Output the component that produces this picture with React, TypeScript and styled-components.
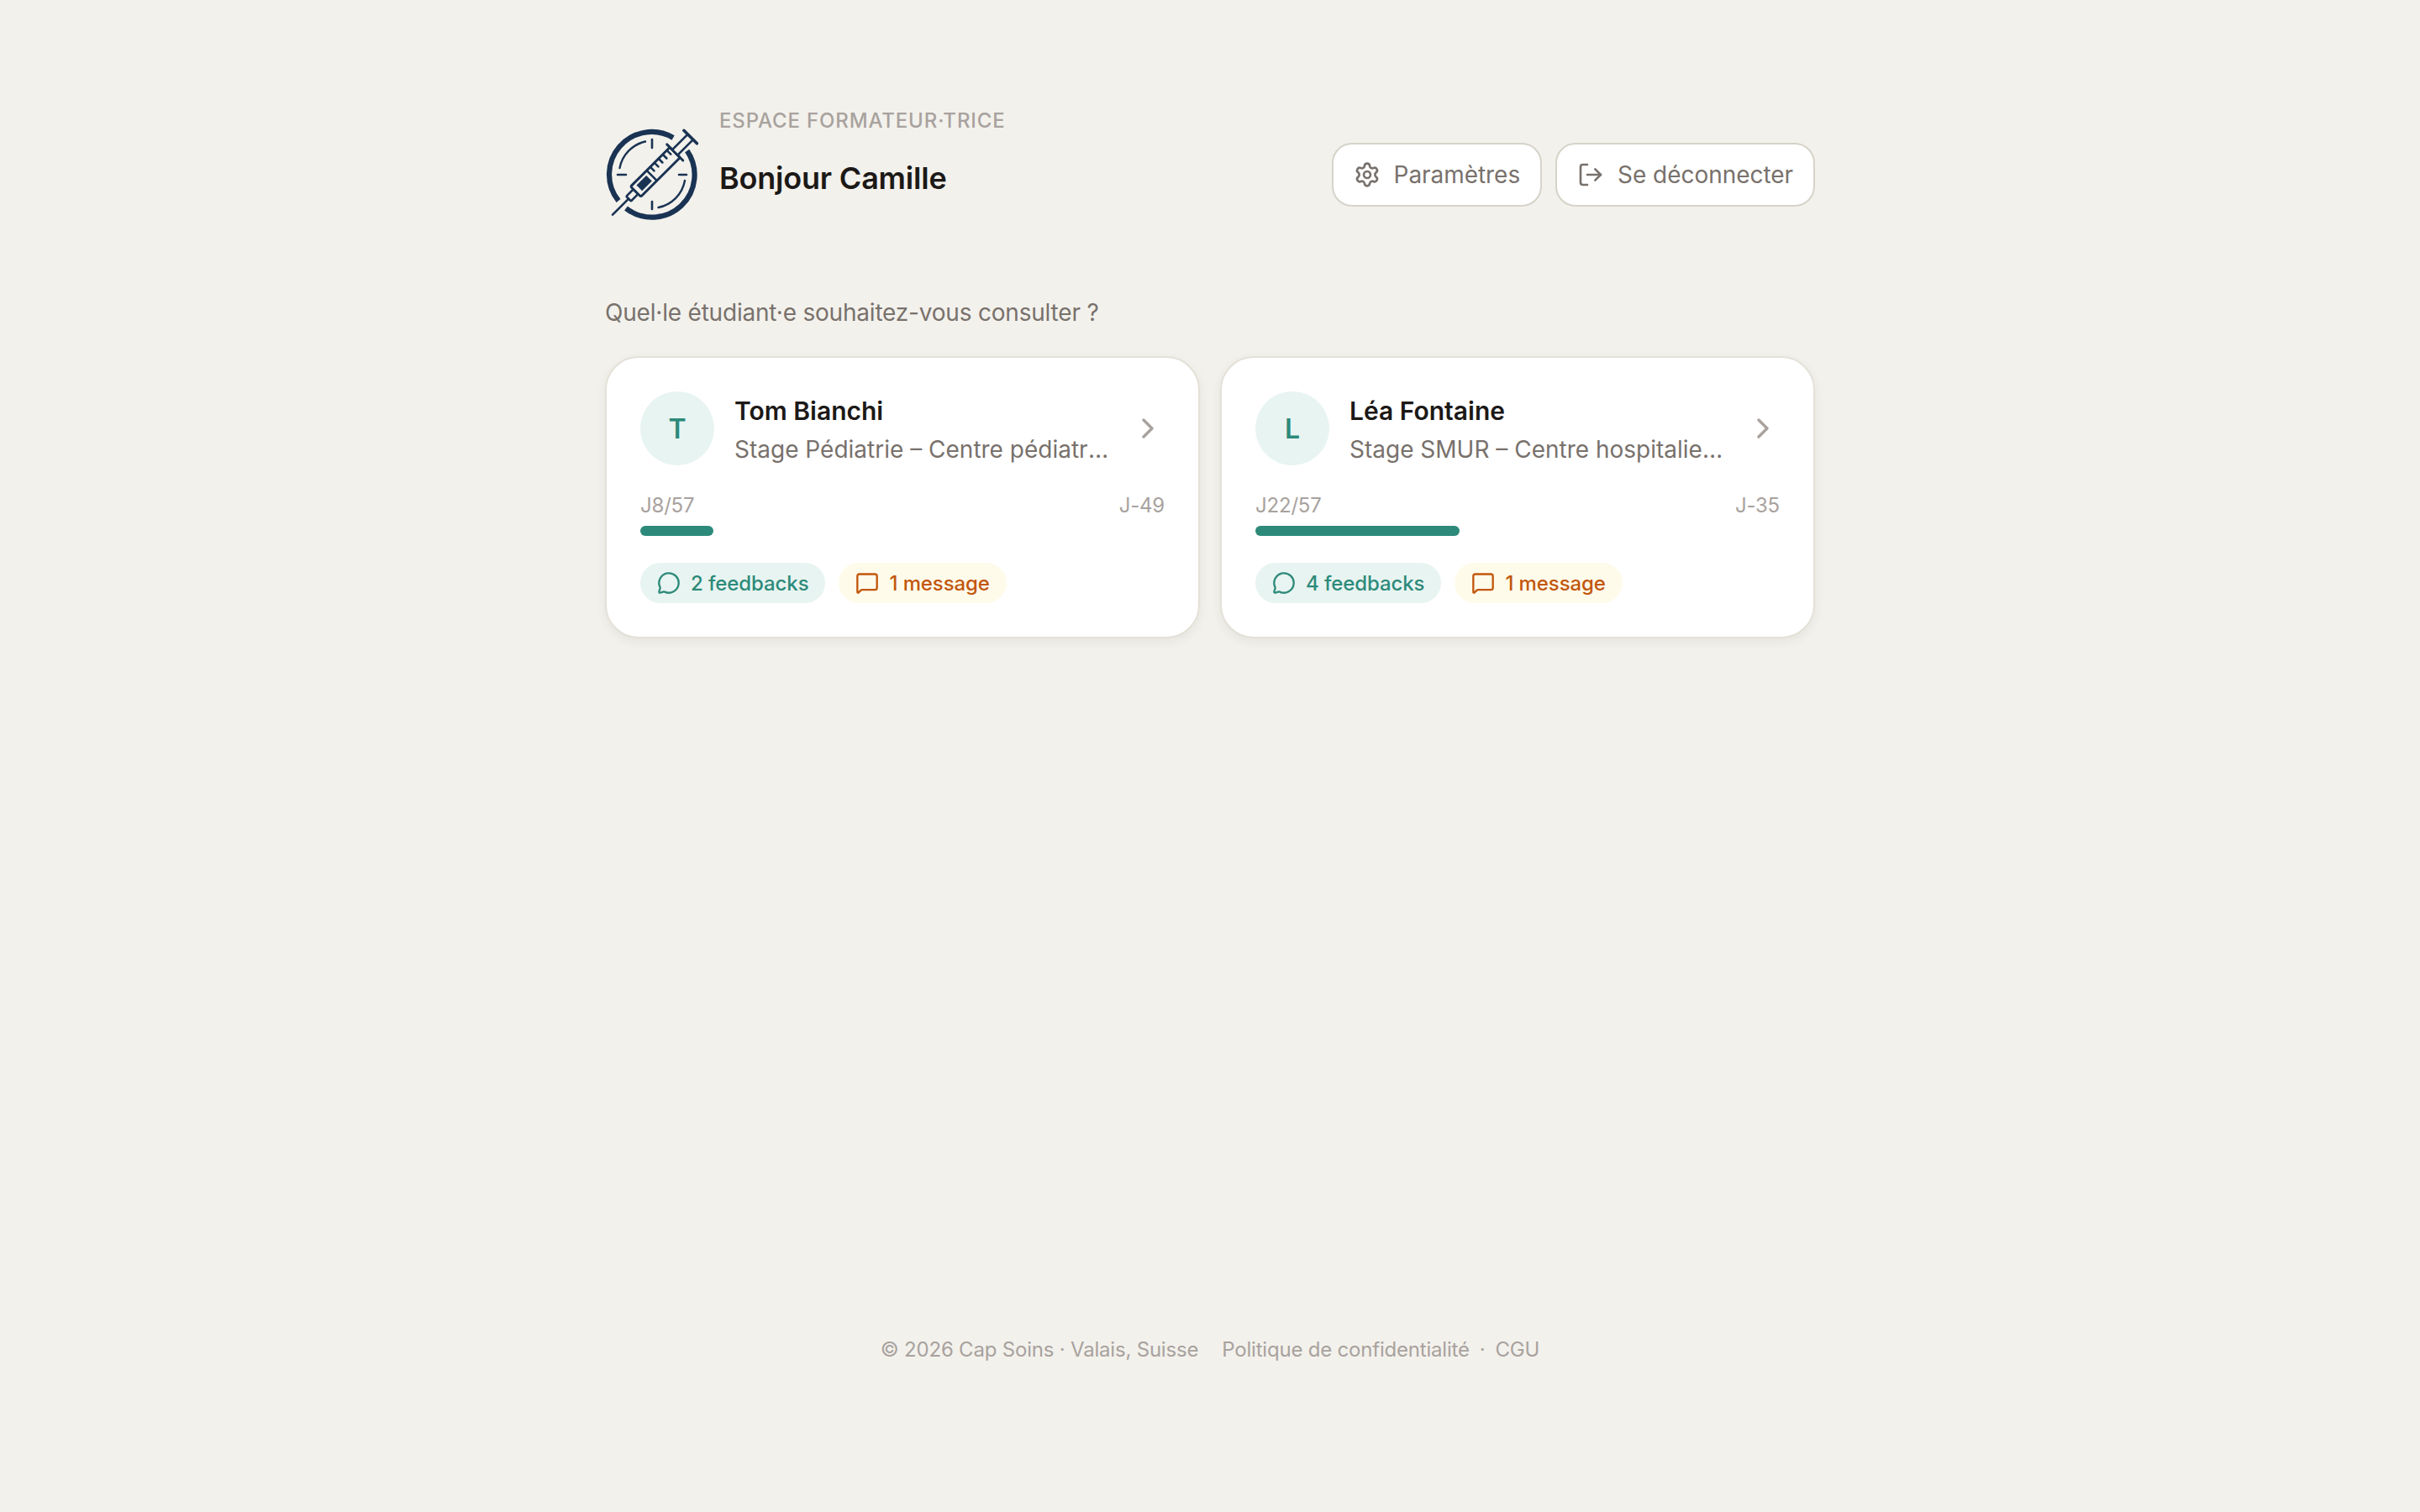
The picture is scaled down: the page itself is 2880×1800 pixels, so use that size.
import * as React from 'react'
import styled, { createGlobalStyle } from 'styled-components'
import { ChevronRight, LogOut, MessageCircle, MessageSquare, Settings } from 'lucide-react'

const GlobalStyle = createGlobalStyle`
	html, body {
		margin: 0;
		padding: 0;
		background: #f3f1ec;
		font-family: Inter, "Noto Sans", sans-serif;
	}
`

const Page = styled.div`
	min-height: 1800px;
	box-sizing: border-box;
	display: flex;
	flex-direction: column;
	align-items: center;
	padding-top: 126px;
`
const Main = styled.main`
	width: 1440px;
	flex: 1;
`
const Header = styled.header`
	display: flex;
	align-items: center;
	justify-content: space-between;
	height: 164px;
`
const Identity = styled.div`
	display: flex;
	align-items: center;
	gap: 24px;
`
const Logo = styled.svg`
	width: 112px;
	height: 112px;
	flex-shrink: 0;
`
const Greeting = styled.div`
	display: flex;
	flex-direction: column;
	padding-bottom: 44px;
	margin-top: -8px;
`
const Eyebrow = styled.span`
	font-size: 24px;
	line-height: 36px;
	font-weight: 500;
	letter-spacing: 0.85px;
	text-transform: uppercase;
	color: #a8a29e;
`
const Hello = styled.h1`
	margin: 24px 0 0;
	font-size: 36px;
	line-height: 52px;
	font-weight: 600;
	letter-spacing: -0.2px;
	color: #1c1917;
`
const Actions = styled.div`
	display: flex;
	gap: 16px;
`
const ActionButton = styled.button`
	display: flex;
	align-items: center;
	gap: 16px;
	height: 76px;
	padding: 0 24px;
	border: 2px solid #d6d3c9;
	border-radius: 24px;
	background: #fff;
	font-family: inherit;
	font-size: 28px;
	letter-spacing: -0.05px;
	color: #78716c;
`
const Intro = styled.p`
	margin: 60px 0 30px;
	font-size: 28px;
	line-height: 44px;
	letter-spacing: -0.2px;
	color: #78716c;
`
const CardGrid = styled.div`
	display: grid;
	grid-template-columns: 1fr 1fr;
	gap: 24px;
`
const Card = styled.article`
	box-sizing: border-box;
	padding: 40px;
	border: 2px solid #e4e1d8;
	border-radius: 40px;
	background: #fff;
	box-shadow: 0 4px 12px rgba(60, 50, 30, 0.07);
	min-width: 0;
`
const CardTop = styled.div`
	display: flex;
	align-items: center;
	gap: 24px;
`
const Avatar = styled.div`
	width: 88px;
	height: 88px;
	flex-shrink: 0;
	display: flex;
	align-items: center;
	justify-content: center;
	border-radius: 50%;
	background: #e8f4f1;
	font-size: 32px;
	font-weight: 600;
	color: #2d8a7a;
`
const CardText = styled.div`
	flex: 1;
	min-width: 0;
	margin-bottom: -4px;
`
const StudentName = styled.div`
	font-size: 30px;
	line-height: 46px;
	font-weight: 600;
	color: #1c1917;
`
const Placement = styled.div`
	font-size: 28px;
	line-height: 46px;
	color: #78716c;
	white-space: nowrap;
	overflow: hidden;
	text-overflow: ellipsis;
`
const Chevron = styled(ChevronRight)`
	flex-shrink: 0;
	color: #a8a29e;
`
const Meta = styled.div`
	display: flex;
	justify-content: space-between;
	margin-top: 30px;
	font-size: 24px;
	line-height: 36px;
	letter-spacing: -0.2px;
	color: #a8a29e;
`
const Track = styled.div`
	height: 12px;
	margin-top: 6px;
	border-radius: 6px;
	background: #fff;
`
const Fill = styled.div`
	height: 100%;
	border-radius: 6px;
	background: #2d8a7a;
`
const Chips = styled.div`
	display: flex;
	gap: 16px;
	margin-top: 32px;
`
const Chip = styled.span<{ $tone: 'teal' | 'amber' }>`
	display: inline-flex;
	align-items: center;
	gap: 12px;
	height: 48px;
	padding: 0 20px;
	border-radius: 24px;
	font-size: 24px;
	font-weight: 500;
	letter-spacing: -0.1px;
	background: ${p => (p.$tone === 'teal' ? '#e8f4f1' : '#fffbeb')};
	color: ${p => (p.$tone === 'teal' ? '#2d8a7a' : '#c2570c')};
`
const Footer = styled.footer`
	display: flex;
	gap: 28px;
	padding-bottom: 174px;
	font-size: 24px;
	line-height: 38px;
	letter-spacing: -0.2px;
	color: #a8a29e;
`
const FooterLinks = styled.span`
	display: inline-flex;
	gap: 12px;
`

const SyringeLogo = () => (
	<Logo viewBox="10 7 112 112" fill="none" stroke="#1a3353" strokeLinecap="round">
		<path d="M91.1 19 A50.5 50.5 0 0 0 26 94" strokeWidth="6.2" strokeLinecap="butt" />
		<path d="M35 103 A50.5 50.5 0 0 0 107.7 34.6" strokeWidth="6.2" strokeLinecap="butt" />
		<path d="M58 23.5 A40 40 0 0 0 27.5 55" strokeWidth="2.4" />
		<path d="M105 70 A40 40 0 0 1 73.5 102" strokeWidth="2.4" />
		<path d="M66 21V31M66 95V104M25 63H35M98 63H107" strokeWidth="2.6" />
		<g transform="translate(19 110.7) rotate(-45)" strokeWidth="2.6">
			<path d="M0 0H27" />
			<rect x="27" y="-4" width="12" height="8" rx="1" strokeLinejoin="round" />
			<rect x="39" y="-8.6" width="66" height="17.2" rx="2" fill="#f3f1ec" strokeWidth="3" />
			<rect x="45" y="-4.7" width="16.5" height="9.4" fill="#1a3353" stroke="none" />
			<path d="M66 -8V8M72 -8V-2M79 -8V-2M86 -8V-2M93 -8V-2M100 -8V-2" />
			<path d="M105 -13.5V13.5" strokeWidth="3" />
			<rect x="105" y="-4.5" width="26" height="9" fill="#f3f1ec" />
			<path d="M131 -11V11" strokeWidth="3.6" />
		</g>
	</Logo>
)

const STUDENTS = [
	{
		name: 'Tom Bianchi',
		placement: 'Stage Pédiatrie – Centre pédiatrique de Sion',
		day: 8,
		left: 'J-49',
		feedbacks: '2 feedbacks',
	},
	{
		name: 'Léa Fontaine',
		placement: 'Stage SMUR – Centre hospitalier du Valais romand',
		day: 22,
		left: 'J-35',
		feedbacks: '4 feedbacks',
	},
]

const App = () => (
	<Page>
		<GlobalStyle />
		<Main>
			<Header>
				<Identity>
					<SyringeLogo />
					<Greeting>
						<Eyebrow>Espace formateur·trice</Eyebrow>
						<Hello>Bonjour Camille</Hello>
					</Greeting>
				</Identity>
				<Actions>
					<ActionButton>
						<Settings size={32} strokeWidth={2} />
						Paramètres
					</ActionButton>
					<ActionButton>
						<LogOut size={32} strokeWidth={2} />
						Se déconnecter
					</ActionButton>
				</Actions>
			</Header>
			<Intro>Quel·le étudiant·e souhaitez-vous consulter ?</Intro>
			<CardGrid>
				{STUDENTS.map(s => (
					<Card key={s.name}>
						<CardTop>
							<Avatar>{s.name[0]}</Avatar>
							<CardText>
								<StudentName>{s.name}</StudentName>
								<Placement>{s.placement}</Placement>
							</CardText>
							<Chevron size={40} strokeWidth={2} />
						</CardTop>
						<Meta>
							<span>J{s.day}/57</span>
							<span>{s.left}</span>
						</Meta>
						<Track>
							<Fill style={{ width: `${Math.round((s.day / 57) * 100)}%` }} />
						</Track>
						<Chips>
							<Chip $tone="teal">
								<MessageCircle size={28} strokeWidth={2} />
								{s.feedbacks}
							</Chip>
							<Chip $tone="amber">
								<MessageSquare size={28} strokeWidth={2} />1 message
							</Chip>
						</Chips>
					</Card>
				))}
			</CardGrid>
		</Main>
		<Footer>
			<span>© 2026 Cap Soins · Valais, Suisse</span>
			<FooterLinks>
				<span>Politique de confidentialité</span>
				<span>·</span>
				<span>CGU</span>
			</FooterLinks>
		</Footer>
	</Page>
)

export default App
